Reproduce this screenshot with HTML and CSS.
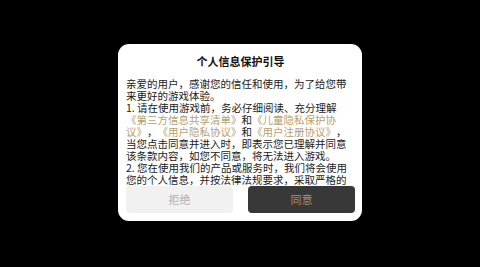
FILE: index.html
```html
<!doctype html>
<html lang="zh-CN">

<head>
    <meta charset="UTF-8">
    <title>个人信息保护引导</title>
    <link rel="stylesheet" href="styles.css">
</head>

<body>
    <div class="overlay">
        <div class="dialog">
            <h2 class="dialog-title">个人信息保护引导</h2>
            <div class="dialog-body">
                <p>亲爱的用户，感谢您的信任和使用，为了给您带来更好的游戏体验。</p>
                <p>1. 请在使用游戏前，务必仔细阅读、充分理解<a href="#">《第三方信息共享清单》</a>和<a href="#">《儿童隐私保护协议》</a>，<a href="#">《用户隐私协议》</a>和<a href="#">《用户注册协议》</a>，当您点击同意并进入时，即表示您已理解并同意该条款内容，如您不同意，将无法进入游戏。</p>
                <p>2. 您在使用我们的产品或服务时，我们将会使用您的个人信息，并按法律法规要求，采取严格的安全保护措施，保护您的个人信息安全。</p>
            </div>
            <div class="dialog-actions">
                <button class="btn btn-reject">拒绝</button>
                <button class="btn btn-accept">同意</button>
            </div>
        </div>
    </div>
</body>

</html>
```

FILE: styles.css
```css
@charset "UTF-8";
*,
*:after,
*:before {
    box-sizing: border-box;
    padding: 0;
    margin: 0;
}

html,
body {
    width: 100%;
    height: 100%;
    background: #000;
}

body {
    font-family: "Noto Sans CJK SC", "Noto Sans", sans-serif;
    text-spacing-trim: space-all;
}

.overlay {
    width: 480px;
    height: 267px;
    display: flex;
    align-items: center;
    justify-content: center;
    padding-bottom: 3px;
}

.dialog {
    width: 244px;
    height: 177px;
    background: #fff;
    border-radius: 11px;
    display: flex;
    flex-direction: column;
    padding: 10px 7px 8px 8px;
}

.dialog-title {
    font-size: 11px;
    font-weight: bold;
    line-height: 14px;
    text-align: center;
    color: #111;
    margin-bottom: 10px;
}

.dialog-body {
    height: 108px;
    overflow: hidden;
    font-size: 10.5px;
    line-height: 12px;
    color: #1a1a1a;
    padding-right: 1px;
}

.dialog-body a {
    color: #b89f6e;
    text-decoration: none;
}

.dialog-actions {
    display: flex;
    gap: 15px;
    height: 27px;
}

.btn {
    flex: 1;
    border: none;
    border-radius: 4px;
    font-family: "Noto Sans CJK SC", "Noto Sans", sans-serif;
    font-size: 11px;
}

.btn-reject {
    background: #f1f1f1;
    color: #b0b0b0;
}

.btn-accept {
    background: #383838;
    color: #a8935f;
}
```
